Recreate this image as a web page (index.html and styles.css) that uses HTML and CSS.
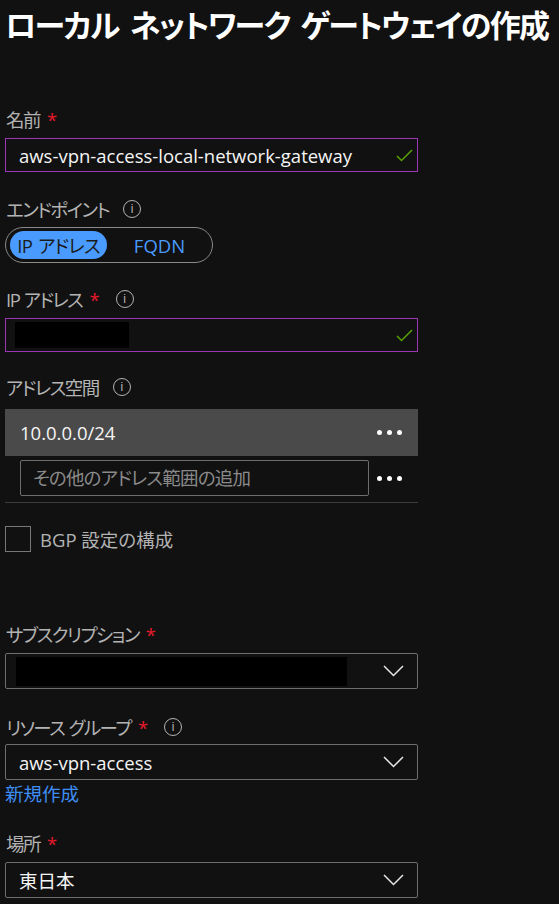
FILE: index.html
```html
<!DOCTYPE html>
<html lang="ja">
<head>
<meta charset="UTF-8">
<meta name="viewport" content="width=device-width, initial-scale=1.0">
<title>ローカル ネットワーク ゲートウェイの作成</title>
<link rel="stylesheet" href="styles.css">
</head>
<body>

<h1 class="title">ローカル ネットワーク ゲートウェイの作成</h1>

<form class="form">
    <div class="field f-name">
        <label class="label">名前<span class="req">*</span></label>
        <div class="input valid">
            <span class="value">aws-vpn-access-local-network-gateway</span>
            <svg class="check" width="17" height="13" viewBox="0 0 17 13"><path d="M1 7 L5.5 11.5 L16 1" fill="none" stroke="#57a300" stroke-width="1.5"/></svg>
        </div>
    </div>

    <div class="field f-endpoint">
        <label class="label">エンドポイント<span class="info">i</span></label>
        <div class="toggle">
            <span class="opt active">IP アドレス</span>
            <span class="opt">FQDN</span>
        </div>
    </div>

    <div class="field f-ip">
        <label class="label">IP アドレス<span class="req">*</span><span class="info">i</span></label>
        <div class="input valid">
            <span class="redact ip-redact"></span>
            <svg class="check" width="17" height="13" viewBox="0 0 17 13"><path d="M1 7 L5.5 11.5 L16 1" fill="none" stroke="#57a300" stroke-width="1.5"/></svg>
        </div>
    </div>

    <div class="field f-space">
        <label class="label">アドレス空間<span class="info">i</span></label>
        <div class="space-row selected">
            <span class="value">10.0.0.0/24</span>
            <span class="dots"><i></i><i></i><i></i></span>
        </div>
        <div class="space-row">
            <div class="small-input">その他のアドレス範囲の追加</div>
            <span class="dots"><i></i><i></i><i></i></span>
        </div>
        <div class="divider"></div>
    </div>

    <div class="checkrow">
        <span class="box"></span>
        <span class="check-label">BGP 設定の構成</span>
    </div>

    <div class="field f-sub">
        <label class="label">サブスクリプション<span class="req">*</span></label>
        <div class="input select">
            <span class="redact sub-redact"></span>
            <svg class="chev" width="21" height="12" viewBox="0 0 21 12"><path d="M1 1 L10.5 10.5 L20 1" fill="none" stroke="#e6e6e6" stroke-width="1.5"/></svg>
        </div>
    </div>

    <div class="field f-rg">
        <label class="label">リソース グループ<span class="req">*</span><span class="info">i</span></label>
        <div class="input select">
            <span class="value">aws-vpn-access</span>
            <svg class="chev" width="21" height="12" viewBox="0 0 21 12"><path d="M1 1 L10.5 10.5 L20 1" fill="none" stroke="#e6e6e6" stroke-width="1.5"/></svg>
        </div>
        <a class="link" href="#">新規作成</a>
    </div>

    <div class="field f-loc">
        <label class="label">場所<span class="req">*</span></label>
        <div class="input select">
            <span class="value">東日本</span>
            <svg class="chev" width="21" height="12" viewBox="0 0 21 12"><path d="M1 1 L10.5 10.5 L20 1" fill="none" stroke="#e6e6e6" stroke-width="1.5"/></svg>
        </div>
    </div>
</form>

</body>
</html>
```

FILE: styles.css
```css
body {
    margin: 0;
    background-color: #111111;
    font-family: "Open Sans", "Noto Sans CJK JP", sans-serif;
    font-feature-settings: "palt";
    color: #f0f0f0;
    overflow: hidden;
}
.title {
    margin: 0;
    padding-left: 5px;
    font-size: 31px;
    line-height: 50px;
    font-weight: bold;
    letter-spacing: -1.7px;
    word-spacing: 5px;
    color: #ffffff;
    white-space: nowrap;
}
.form {
    width: 413px;
    margin-left: 5px;
}
.field {
    display: flex;
    flex-direction: column;
}
.label {
    display: flex;
    align-items: center;
    height: 22px;
    font-size: 18.5px;
    letter-spacing: -1.5px;
    word-spacing: 1px;
    color: #b3b3b3;
    margin-bottom: 8px;
    padding-left: 1px;
    white-space: pre;
}
.req {
    color: #e8192c;
    margin-left: 7px;
    letter-spacing: 0;
}
.info {
    display: inline-flex;
    align-items: center;
    justify-content: center;
    box-sizing: border-box;
    width: 18px;
    height: 18px;
    border: 1.5px solid #b3b3b3;
    border-radius: 50%;
    font-size: 12px;
    line-height: 1;
    letter-spacing: 0;
    margin-left: 14px;
    font-family: "Liberation Sans", sans-serif;
}
.req + .info {
    margin-left: 16px;
}
.input {
    display: flex;
    align-items: center;
    justify-content: space-between;
    height: 36px;
    box-sizing: border-box;
    border: 1px solid #6e6e6e;
    border-radius: 2px;
    padding: 0 13px 0 13px;
    font-size: 18.5px;
}
.input.valid {
    height: 34px;
    border-color: #9c36b5;
    border-radius: 0;
    padding-right: 4px;
}
.value {
    color: #f5f5f5;
}
.redact {
    display: block;
    background: #000000;
}
.ip-redact {
    width: 114px;
    height: 26px;
    margin-left: -4px;
}
.sub-redact {
    width: 331px;
    height: 29px;
    margin-left: -3px;
}
.f-name { margin-top: 58px; }
.f-endpoint { margin-top: 26px; }
.f-endpoint .label { margin-bottom: 7px; }
.toggle {
    display: flex;
    align-items: center;
    width: 208px;
    height: 36px;
    box-sizing: border-box;
    border: 1px solid #8a8a8a;
    border-radius: 18px;
    padding: 0 4px;
}
.opt {
    display: flex;
    align-items: center;
    justify-content: center;
    width: 103px;
    height: 28px;
    border-radius: 14px;
    font-size: 18.5px;
    color: #4a9bff;
}
.opt.active {
    background-color: #4a9bff;
    color: #1b1b1b;
    letter-spacing: -0.8px;
    word-spacing: 2px;
}
.opt + .opt {
    padding-left: 4px;
}
.f-ip { margin-top: 25px; }
.f-space { margin-top: 24px; }
.f-space .label { margin-bottom: 11px; }
.space-row {
    display: flex;
    align-items: center;
    justify-content: space-between;
    height: 44px;
    padding: 0 16px 0 15px;
}
.space-row.selected {
    height: 47px;
    background-color: #4a4a4a;
    font-size: 18.5px;
}
.small-input {
    box-sizing: border-box;
    width: 349px;
    height: 36px;
    border: 1px solid #6e6e6e;
    border-radius: 2px;
    padding: 0 12px;
    font-size: 18.5px;
    letter-spacing: -0.8px;
    line-height: 34px;
    color: #8a8a8a;
}
.dots {
    display: flex;
    gap: 5px;
}
.dots i {
    display: block;
    width: 5px;
    height: 5px;
    border-radius: 50%;
    background: #ffffff;
}
.divider {
    height: 1px;
    background-color: #3c3c3c;
    margin-top: 2px;
}
.checkrow {
    display: flex;
    align-items: center;
    margin-top: 23px;
}
.box {
    width: 24px;
    height: 24px;
    border: 1px solid #777777;
}
.check-label {
    margin-left: 9px;
    font-size: 18.5px;
    color: #b3b3b3;
}
.f-sub { margin-top: 71px; }
.f-rg { margin-top: 27px; }
.f-rg .label { margin-bottom: 6px; }
.link {
    font-size: 18.5px;
    line-height: 22px;
    margin-top: 3px;
    color: #3f8ef5;
    text-decoration: none;
}
.f-loc { margin-top: 27px; }
```
